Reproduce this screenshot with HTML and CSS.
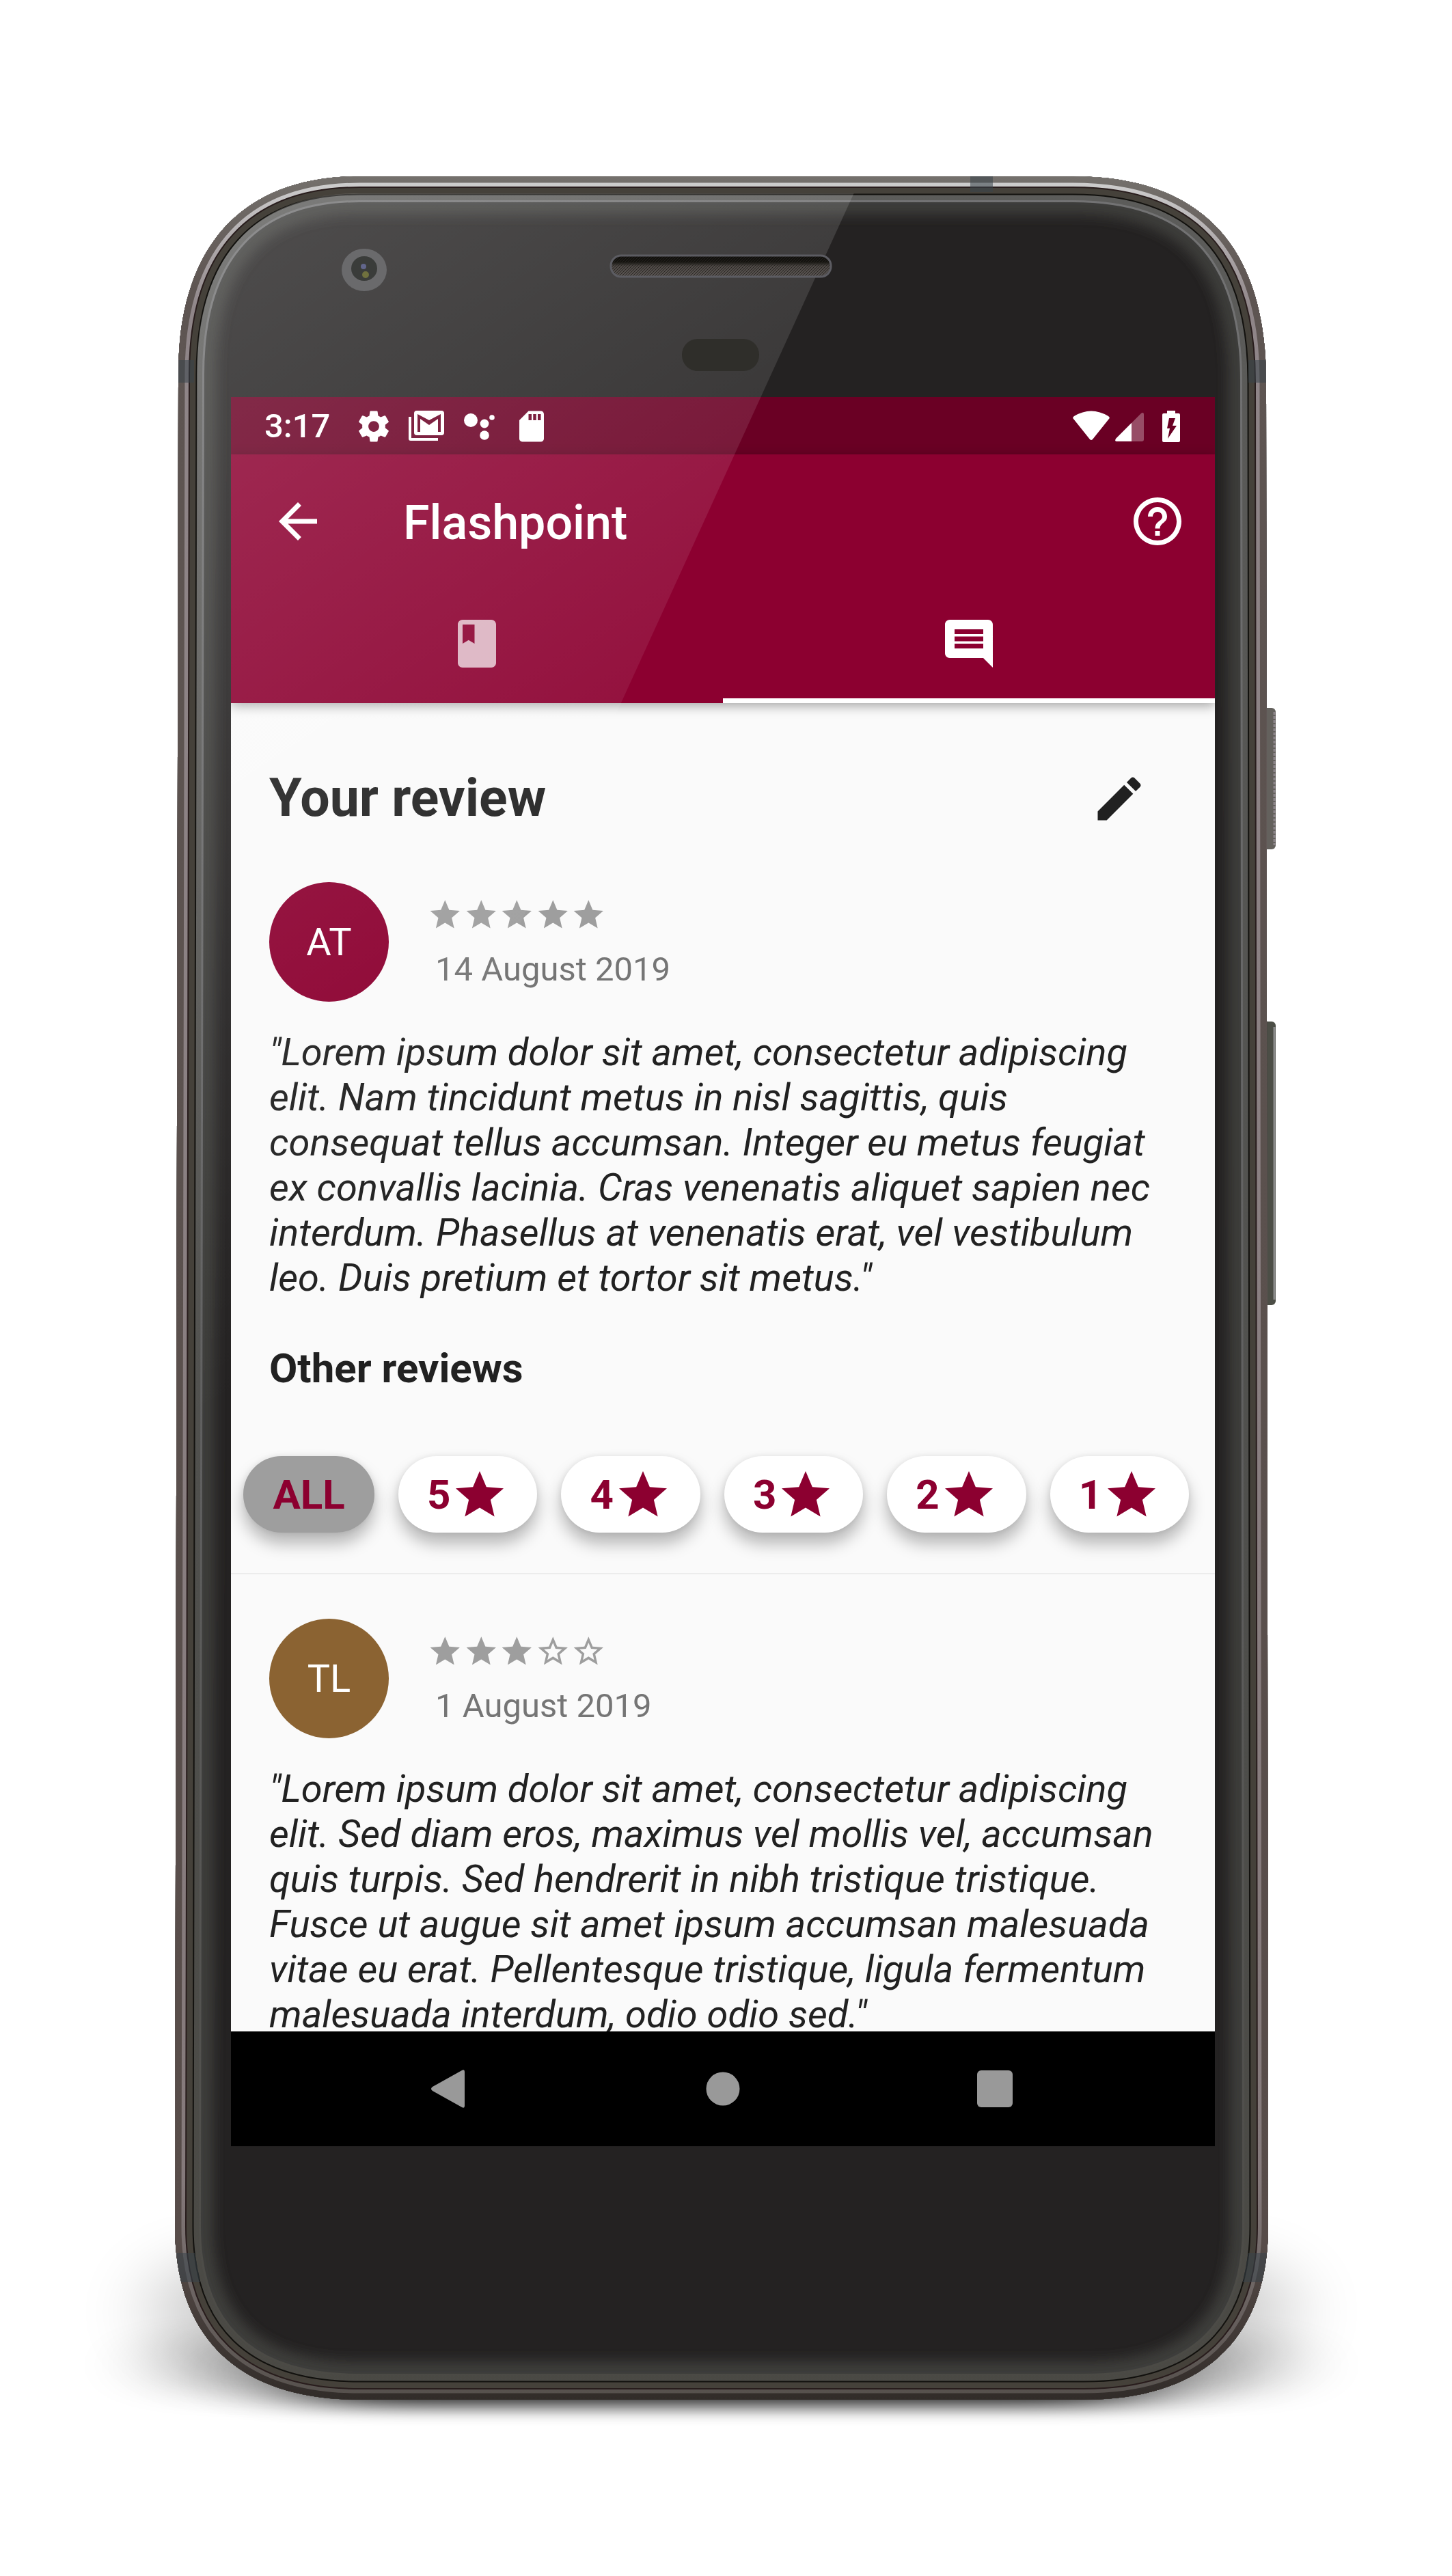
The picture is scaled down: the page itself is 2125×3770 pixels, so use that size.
FILE: index.html
```html
<!DOCTYPE html>
<html lang="en">
<head>
<meta charset="utf-8">
<meta name="viewport" content="width=device-width, initial-scale=1">
<title>Flashpoint</title>
<link rel="stylesheet" href="styles.css">
</head>
<body>
<svg class="defs" aria-hidden="true">
  <symbol id="star" viewBox="0 0 24 24"><path d="M12 17.27L18.18 21l-1.64-7.03L22 9.24l-7.19-.61L12 2 9.19 8.63 2 9.24l5.46 4.73L5.82 21z"/></symbol>
  <symbol id="star-outline" viewBox="0 0 24 24"><path d="M22 9.24l-7.19-.62L12 2 9.19 8.63 2 9.24l5.46 4.73L5.82 21 12 17.27 18.18 21l-1.63-7.03L22 9.24zM12 15.4l-3.76 2.27 1-4.28-3.32-2.88 4.38-.38L12 6.1l1.71 4.04 4.38.38-3.32 2.88 1 4.28L12 15.4z"/></symbol>
</svg>
<div class="phone">
  <svg class="phone-body" viewBox="0 0 1600 3254" preserveAspectRatio="none" aria-hidden="true">
    <defs>
      <path id="outline" d="M5 290C5 100 100 0 270 0H1314C1500 0 1597 100 1597 300L1600 3000C1600 3160 1510 3254 1330 3254H270C90 3254 0 3160 0 3000Z"/>
      <clipPath id="body-clip"><use href="#outline"/></clipPath>
      <linearGradient id="metal" x1="0" y1="0" x2="0" y2="1">
        <stop offset="0" stop-color="#74706c"/><stop offset=".05" stop-color="#5e5552"/><stop offset=".93" stop-color="#574c49"/><stop offset="1" stop-color="#312c29"/>
      </linearGradient>
      <linearGradient id="shine" x1="0" y1="0" x2="0" y2="1">
        <stop offset="0" stop-color="#d0d0d0"/><stop offset=".06" stop-color="#8f8588"/><stop offset=".9" stop-color="#857a7b"/><stop offset="1" stop-color="#55504c"/>
      </linearGradient>
      <linearGradient id="edge" x1="0" y1="0" x2="0" y2="1">
        <stop offset="0" stop-color="#5c5c5a"/><stop offset=".7" stop-color="#4e4e4b"/><stop offset="1" stop-color="#4a4944"/>
      </linearGradient>
      <linearGradient id="rim" x1="0" y1="0" x2="0" y2="1">
        <stop offset="0" stop-color="#737374"/><stop offset=".6" stop-color="#5f5f5f"/><stop offset="1" stop-color="#4a4944"/>
      </linearGradient>
      <filter id="soft" x="-10%" y="-10%" width="120%" height="120%"><feGaussianBlur stdDeviation="9"/></filter>
      <filter id="shadow-tall" x="-20%" y="-100%" width="140%" height="300%"><feGaussianBlur stdDeviation="56 40"/></filter>
      <filter id="shadow-wide" x="-20%" y="-150%" width="140%" height="400%"><feGaussianBlur stdDeviation="70 18"/></filter>
      <filter id="shadow-near" x="-20%" y="-150%" width="140%" height="400%"><feGaussianBlur stdDeviation="80 13"/></filter>
    </defs>
    <rect x="-30" y="3050" width="1660" height="150" rx="75" opacity=".2" filter="url(#shadow-tall)"/>
    <rect x="0" y="3160" width="1600" height="86" rx="43" opacity=".24" filter="url(#shadow-wide)"/>
    <rect x="180" y="3180" width="1240" height="84" rx="40" opacity=".8" filter="url(#shadow-near)"/>
    <rect x="1588" y="778" width="23" height="207" rx="6" fill="#64615d"/>
    <path d="M1609 784V979" stroke="#8d868b" stroke-width="3" stroke-dasharray="4 2"/>
    <rect x="1588" y="1237" width="23" height="415" rx="6" fill="#4c4e46"/>
    <path d="M1609 1245V1644" stroke="#8b8b8b" stroke-width="3"/>
    <g clip-path="url(#body-clip)" fill="none">
      <use href="#outline" fill="#242222"/>
      <use href="#outline" stroke="#3e3d3a" stroke-width="112" filter="url(#soft)"/>
      <use href="#outline" stroke="url(#rim)" stroke-width="76"/>
      <use href="#outline" stroke="url(#edge)" stroke-width="70"/>
      <use href="#outline" stroke="#12110e" stroke-width="55"/>
      <use href="#outline" stroke="#45413a" stroke-width="51"/>
      <use href="#outline" stroke="#281c1c" stroke-width="34"/>
      <use href="#outline" stroke="url(#shine)" stroke-width="30"/>
      <use href="#outline" stroke="url(#metal)" stroke-width="19"/>
      <g fill="#39434a" fill-opacity=".55">
        <path d="M0 269h28v33H0zM1571 269h29v33h-29zM1164 0h33v23h-33zM0 3039h29l8 43H0zM1600 3039h-29l-8 43h37z"/>
      </g>
    </g>
  </svg>

  <div class="screen">
    <div class="status-bar">
      <span class="clock">3:17</span>
      <div class="notifications">
        <svg viewBox="0 0 24 24"><path d="M19.43 12.98c.04-.32.07-.64.07-.98s-.03-.66-.07-.98l2.11-1.65c.19-.15.24-.42.12-.64l-2-3.46c-.12-.22-.39-.3-.61-.22l-2.49 1c-.52-.4-1.08-.73-1.69-.98l-.38-2.65C14.46 2.18 14.25 2 14 2h-4c-.25 0-.46.18-.49.42l-.38 2.65c-.61.25-1.17.59-1.69.98l-2.49-1c-.23-.09-.49 0-.61.22l-2 3.46c-.13.22-.07.49.12.64l2.11 1.65c-.04.32-.07.65-.07.98s.03.66.07.98l-2.11 1.65c-.19.15-.24.42-.12.64l2 3.46c.12.22.39.3.61.22l2.49-1c.52.4 1.08.73 1.69.98l.38 2.65c.03.24.24.42.49.42h4c.25 0 .46-.18.49-.42l.38-2.65c.61-.25 1.17-.59 1.69-.98l2.49 1c.23.09.49 0 .61-.22l2-3.46c.12-.22.07-.49-.12-.64l-2.11-1.65zM12 15.5c-1.93 0-3.5-1.57-3.5-3.5s1.57-3.5 3.5-3.5 3.5 1.57 3.5 3.5-1.57 3.5-3.5 3.5z"/></svg>
        <svg viewBox="0 0 54 54"><path fill-rule="evenodd" d="M13 4H49Q53 4 53 8V36Q53 40 49 40H13Q9 40 9 36V8Q9 4 13 4ZM14 9V35H18V16L31 25L44 16V35H48V9L31 18Z"/><path d="M1 13H5V44H44V48H4Q1 48 1 45Z"/></svg>
        <svg viewBox="0 0 54 54"><circle cx="15" cy="18" r="10"/><circle cx="35" cy="23" r="6.4"/><circle cx="46" cy="14" r="3.8"/><circle cx="35" cy="40" r="6.8"/></svg>
        <svg viewBox="0 0 24 24"><path d="M18 2h-8L4.02 8 4 20c0 1.1.9 2 2 2h12c1.1 0 2-.9 2-2V4c0-1.1-.9-2-2-2zm-6 6h-2V4h2v4zm3 0h-2V4h2v4zm3 0h-2V4h2v4z"/></svg>
      </div>
      <div class="system-icons">
        <svg class="wifi" viewBox="0 0 54 46"><path d="M1 12Q-1 10 2 8Q27-7 52 8Q55 10 53 12L29 42Q27 44 25 42Z"/></svg>
        <svg class="signal" viewBox="0 0 42 46"><path d="M42 6V42Q42 45 39 45H2Q-1 45 1 41L38 4Q42 1 42 6Z" opacity=".3"/><path d="M24 18V45H2Q-1 45 1 41Z"/></svg>
        <svg class="battery" viewBox="0 0 26 46"><path fill-rule="evenodd" d="M7 0H19V4H24Q26 4 26 6V44Q26 46 24 46H2Q0 46 0 44V6Q0 4 2 4H7ZM10 11L7 26H11L8 41L21 22H15L19 11Z"/></svg>
      </div>
    </div>

    <header class="app-header">
      <div class="toolbar">
        <button class="icon-button" type="button" aria-label="Back"><svg viewBox="0 0 24 24"><path d="M20 11H7.83l5.59-5.59L12 4l-8 8 8 8 1.41-1.41L7.83 13H20v-2z"/></svg></button>
        <h1 class="app-title">Flashpoint</h1>
        <button class="icon-button" type="button" aria-label="Help"><svg viewBox="0 0 24 24"><path d="M11 18h2v-2h-2v2zm1-16C6.48 2 2 6.48 2 12s4.48 10 10 10 10-4.48 10-10S17.52 2 12 2zm0 18c-4.41 0-8-3.59-8-8s3.59-8 8-8 8 3.59 8 8-3.59 8-8 8zm0-14c-2.21 0-4 1.79-4 4h2c0-1.1.9-2 2-2s2 .9 2 2c0 2-3 1.75-3 5h2c0-2.25 3-2.5 3-5 0-2.21-1.79-4-4-4z"/></svg></button>
      </div>
      <div class="tabs" role="tablist">
        <button class="tab" type="button" role="tab" aria-selected="false" aria-label="Book"><svg viewBox="0 0 24 24"><path d="M18 2H6c-1.100 0-2 .9-2 2v16c0 1.100.9 2 2 2h12c1.100 0 2-.9 2-2V4c0-1.100-.9-2-2-2zM6 4h5v8l-2.500-1.500L6 12V4z"/></svg></button>
        <button class="tab tab-active" type="button" role="tab" aria-selected="true" aria-label="Reviews"><svg viewBox="0 0 24 24"><path d="M21.990 4c0-1.100-.89-2-1.990-2H4c-1.100 0-2 .9-2 2v12c0 1.100.9 2 2 2h14l4 4-.01-18zM18 14H6v-2h12v2zm0-3H6V9h12v2zm0-3H6V6h12v2z"/></svg></button>
      </div>
    </header>

    <main class="content">
      <section class="own-review">
        <div class="section-head">
          <h2 class="section-title">Your review</h2>
          <button class="icon-button" type="button" aria-label="Edit review"><svg viewBox="0 0 24 24"><path d="M3 17.250V21h3.750L17.810 9.940l-3.750-3.750L3 17.250zM20.710 7.040c.39-.39.39-1.020 0-1.410l-2.340-2.340c-.39-.39-1.020-.39-1.410 0l-1.830 1.830 3.750 3.750 1.830-1.830z"/></svg></button>
        </div>
        <article class="review">
          <div class="review-head">
            <span class="avatar">AT</span>
            <div class="review-meta">
              <div class="stars" role="img" aria-label="5 of 5 stars">
                <svg><use href="#star"/></svg><svg><use href="#star"/></svg><svg><use href="#star"/></svg><svg><use href="#star"/></svg><svg><use href="#star"/></svg>
              </div>
              <time class="date" datetime="2019-08-14">14 August 2019</time>
            </div>
          </div>
          <p class="review-text">"Lorem ipsum dolor sit amet, consectetur adipiscing elit. Nam tincidunt metus in nisl sagittis, quis consequat tellus accumsan. Integer eu metus feugiat ex convallis lacinia. Cras venenatis aliquet sapien nec interdum. Phasellus at venenatis erat, vel vestibulum leo. Duis pretium et tortor sit metus."</p>
        </article>
        <h3 class="subtitle">Other reviews</h3>
      </section>

      <div class="filters">
        <button class="chip chip-active" type="button">ALL</button>
        <button class="chip" type="button">5<svg><use href="#star"/></svg></button>
        <button class="chip" type="button">4<svg><use href="#star"/></svg></button>
        <button class="chip" type="button">3<svg><use href="#star"/></svg></button>
        <button class="chip" type="button">2<svg><use href="#star"/></svg></button>
        <button class="chip" type="button">1<svg><use href="#star"/></svg></button>
      </div>

      <section class="other-reviews">
        <article class="review">
          <div class="review-head">
            <span class="avatar avatar-brown">TL</span>
            <div class="review-meta">
              <div class="stars" role="img" aria-label="3 of 5 stars">
                <svg><use href="#star"/></svg><svg><use href="#star"/></svg><svg><use href="#star"/></svg><svg><use href="#star-outline"/></svg><svg><use href="#star-outline"/></svg>
              </div>
              <time class="date" datetime="2019-08-01">1 August 2019</time>
            </div>
          </div>
          <p class="review-text">"Lorem ipsum dolor sit amet, consectetur adipiscing elit. Sed diam eros, maximus vel mollis vel, accumsan quis turpis. Sed hendrerit in nibh tristique tristique. Fusce ut augue sit amet ipsum accumsan malesuada vitae eu erat. Pellentesque tristique, ligula fermentum malesuada interdum, odio odio sed."</p>
        </article>
      </section>
    </main>

    <nav class="nav-bar" aria-label="System">
      <button class="nav-button" type="button" aria-label="Back"><svg viewBox="0 0 84 84"><path d="M17 39L60 15Q64 13 64 17V67Q64 71 60 69L17 45Q13 42 17 39Z"/></svg></button>
      <button class="nav-button" type="button" aria-label="Home"><svg viewBox="0 0 84 84"><circle cx="42" cy="42" r="24.500"/></svg></button>
      <button class="nav-button" type="button" aria-label="Recent apps"><svg viewBox="0 0 84 84"><rect x="14" y="15" width="52" height="54" rx="6"/></svg></button>
    </nav>
  </div>

  <svg class="phone-glass" viewBox="0 0 1600 3254" preserveAspectRatio="none" aria-hidden="true">
    <defs>
      <clipPath id="glass-clip"><path d="M32 290C32 120 115 25 270 25H1314V3226H270C110 3226 28 3140 28 3000Z"/></clipPath>
      <linearGradient id="gloss" gradientUnits="userSpaceOnUse" x1="144" y1="42" x2="931" y2="1230">
        <stop offset="0" stop-color="#fff" stop-opacity=".19"/><stop offset="1" stop-color="#fff" stop-opacity="0"/>
      </linearGradient>
      <linearGradient id="grille" x1="0" y1="0" x2="0" y2="1">
        <stop offset="0" stop-color="#100f0d"/><stop offset=".3" stop-color="#14130f"/><stop offset=".5" stop-color="#4d4845"/><stop offset="1" stop-color="#5a5553"/>
      </linearGradient>
      <pattern id="mesh" width="4" height="4" patternUnits="userSpaceOnUse"><path d="M0 4L4 0" stroke="#26231f"/></pattern>
    </defs>
    <path d="M0 0H1005L0 2200Z" fill="url(#gloss)" clip-path="url(#glass-clip)"/>
    <ellipse cx="277" cy="137" rx="33" ry="31" fill="#6a6a6c"/>
    <ellipse cx="277" cy="135" rx="19" ry="18" fill="#3a3c3a"/>
    <circle cx="276" cy="132" r="4" fill="#62668c"/>
    <circle cx="279" cy="144" r="5" fill="#70713e"/>
    <rect x="638" y="116" width="322" height="31" rx="15" fill="url(#grille)"/>
    <rect x="638" y="116" width="322" height="31" rx="15" fill="url(#mesh)" stroke="#5c5c62" stroke-width="3"/>
    <rect x="742" y="238" width="113" height="47" rx="23" fill="#2f2e2a"/>
  </svg>
</div>
</body>
</html>
```
FILE: styles.css
```css
* {
  box-sizing: border-box;
}

body {
  margin: 0;
  padding: 258px 269px 258px 256px;
  background: #fff;
  color: #212121;
  font-family: Roboto, "Liberation Sans", sans-serif;
  font-size: 56px;
  line-height: 66px;
}

h1,
h2,
h3,
p {
  margin: 0;
}

button {
  padding: 0;
  border: 0;
  background: none;
  color: inherit;
  font: inherit;
  cursor: pointer;
}

svg {
  display: block;
  fill: currentColor;
}

.defs {
  position: absolute;
  width: 0;
  height: 0;
}

/* Device */

.phone {
  position: relative;
  max-width: 1600px;
  padding: 323px 78px 371px 82px;
}

.phone-body,
.phone-glass {
  position: absolute;
  inset: 0;
  width: 100%;
  height: 100%;
  overflow: visible;
  color: #000;
}

.phone-glass {
  pointer-events: none;
}

.screen {
  position: relative;
  display: flex;
  flex-direction: column;
  aspect-ratio: 9 / 16;
  overflow: hidden;
  background: #fafafa;
}

/* Status bar */

.status-bar {
  display: flex;
  flex: none;
  align-items: center;
  height: 84px;
  padding: 2px 51px 0 49px;
  background: #6a0024;
  color: #fff;
}

.clock {
  font-size: 49px;
  font-weight: 500;
}

.notifications {
  display: flex;
  gap: 23px;
  margin-left: 37px;
}

.notifications svg {
  width: 54px;
  height: 54px;
}

.system-icons {
  display: flex;
  margin-left: auto;
}

.wifi {
  width: 54px;
  height: 46px;
}

.signal {
  width: 42px;
  height: 46px;
  margin: 0 27px 0 8px;
}

.battery {
  width: 26px;
  height: 46px;
}

/* App bar */

.app-header {
  position: relative;
  flex: none;
  background: #8c0030;
  box-shadow: 0 4px 16px rgba(0, 0, 0, 0.35);
  color: #fff;
}

.toolbar {
  display: flex;
  align-items: center;
  height: 196px;
  padding: 0 42px 0 56px;
}

.icon-button svg {
  width: 84px;
  height: 84px;
}

.app-title {
  flex: 1;
  margin-left: 112px;
  padding-top: 3px;
  font-size: 70px;
  font-weight: 500;
  line-height: 84px;
}

.tabs {
  display: flex;
  height: 168px;
}

.tab {
  display: flex;
  flex: 1;
  align-items: center;
  justify-content: center;
  border-bottom: 7px solid transparent;
}

.tab svg {
  width: 84px;
  height: 84px;
  opacity: 0.7;
}

.tab-active {
  border-color: #fff;
}

.tab-active svg {
  opacity: 1;
}

/* Reviews */

.content {
  flex: 1;
  min-height: 0;
  overflow: hidden;
}

.own-review {
  padding: 98px 56px 0;
}

.section-head {
  display: flex;
  align-items: center;
  justify-content: space-between;
  margin-bottom: 80px;
  padding-right: 42px;
}

.section-title {
  padding-bottom: 2px;
  font-size: 77px;
  font-weight: 700;
  line-height: 82px;
}

.review-head {
  display: flex;
  gap: 56px;
  margin-bottom: 41px;
}

.avatar {
  display: flex;
  flex: none;
  align-items: center;
  justify-content: center;
  width: 175px;
  height: 175px;
  border-radius: 50%;
  background: #8c0030;
  color: #fff;
}

.avatar-brown {
  background: #8b6332;
}

.review-meta {
  display: flex;
  flex-direction: column;
  gap: 25px;
  padding-top: 22px;
}

.stars {
  display: grid;
  grid-template-columns: repeat(5, 1fr);
  width: 263px;
  color: #9e9e9e;
}

.stars svg {
  width: 100%;
  height: 52px;
}

.date {
  padding-left: 12px;
  color: #757575;
  font-size: 49px;
  line-height: 58px;
}

.review-text {
  font-style: italic;
}

.subtitle {
  margin-top: 67px;
  font-size: 60px;
  font-weight: 700;
}

.filters {
  display: flex;
  gap: 35px;
  padding: 95px 18px 59px;
  border-bottom: 2px solid #ececec;
}

.chip {
  display: flex;
  align-items: center;
  justify-content: center;
  gap: 1px;
  min-width: 192px;
  height: 112px;
  padding: 2px 42px 0;
  border-radius: 56px;
  background: #fff;
  box-shadow: 0 16px 24px rgba(0, 0, 0, 0.28), 0 0 8px rgba(0, 0, 0, 0.08);
  color: #8c0030;
  font-size: 60px;
  font-weight: 700;
}

.chip svg {
  width: 84px;
  height: 84px;
}

.chip-active {
  background: #9e9e9e;
}

.other-reviews {
  padding: 65px 56px 0;
}

/* Navigation bar */

.nav-bar {
  display: flex;
  flex: none;
  align-items: center;
  justify-content: center;
  gap: 316px;
  height: 168px;
  background: #000;
  color: #999;
}

.nav-button svg {
  width: 84px;
  height: 84px;
}
```
